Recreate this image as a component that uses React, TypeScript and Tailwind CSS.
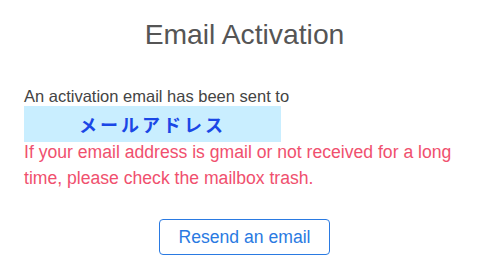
import React from 'react';

const App: React.FC = () => {
  return (
    <div className="w-[501px] h-[273px] bg-white pl-6 pr-[36px] font-['Liberation_Sans',Arial,sans-serif]">
      <h1 className="pt-[16px] text-center text-[28.3px] leading-[36px] text-[#555555]">
        Email Activation
      </h1>
      <p className="pt-[34px] text-[16.5px] leading-[20px] text-[#444444]">
        An activation email has been sent to
      </p>
      <div className="w-[257px] h-[36px] bg-[#c9eeff] flex items-center justify-center">
        <span className="font-['Noto_Sans_CJK_JP',sans-serif] font-bold text-[18px] tracking-[3px] text-[#1a47e6]">
          メールアドレス
        </span>
      </div>
      <p className="-mt-[3px] text-[17.6px] leading-[26px] text-[#f0506e]">
        If your email address is gmail or not received for a long time, please check the mailbox trash.
      </p>
      <div className="flex justify-center pt-[28px]">
        <button className="w-[171px] h-[36px] rounded-[4px] border border-[#2a7ae2] text-[17.6px] text-[#2a7ae2] bg-white">
          Resend an email
        </button>
      </div>
    </div>
  );
};

export default App;
